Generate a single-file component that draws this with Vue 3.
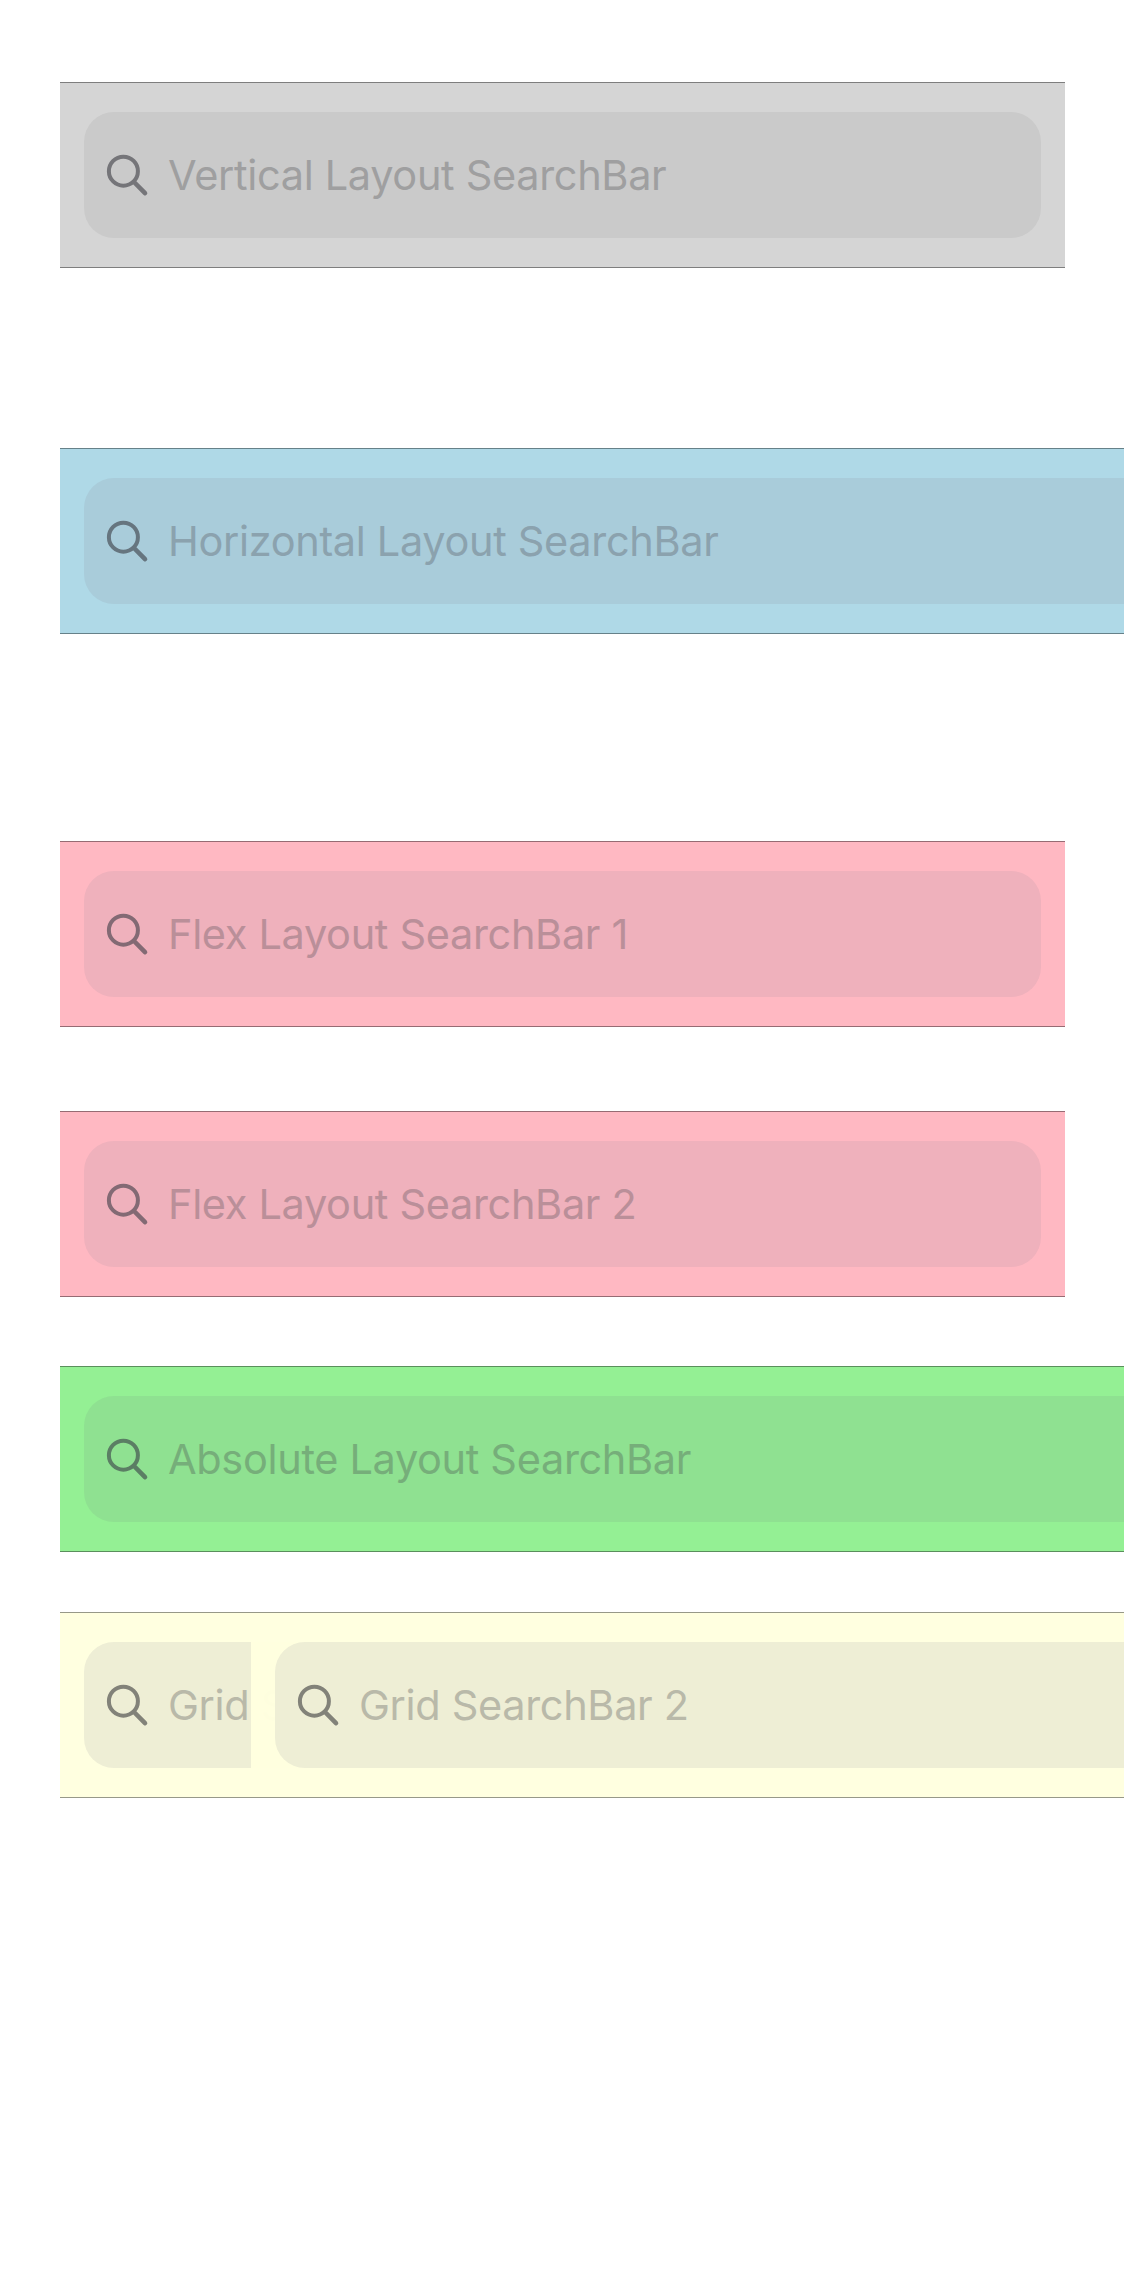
<script setup>
const sections = [
  { name: 'vertical', bars: [{ text: 'Vertical Layout SearchBar', tone: 'gray' }] },
  { name: 'horizontal', bars: [{ text: 'Horizontal Layout SearchBar', tone: 'blue', wide: true }] },
  { name: 'flex', bars: [
    { text: 'Flex Layout SearchBar 1', tone: 'pink' },
    { text: 'Flex Layout SearchBar 2', tone: 'pink' },
  ] },
  { name: 'absolute', bars: [{ text: 'Absolute Layout SearchBar', tone: 'green', wide: true }] },
  { name: 'grid', bars: [
    { text: 'Grid SearchBar 1', tone: 'yellow' },
    { text: 'Grid SearchBar 2', tone: 'yellow', wide: true },
  ] },
]
</script>

<template>
  <main class="page">
    <section v-for="s in sections" :key="s.name" :class="['section', s.name]">
      <div v-for="b in s.bars" :key="b.text" :class="['bar', b.tone, { wide: b.wide }]">
        <div class="field">
          <svg class="icon" viewBox="0 0 44 44" fill="none" stroke="currentColor">
            <circle cx="18.4" cy="18.2" r="14.5" stroke-width="4" />
            <path d="M29 29 L40 40.2" stroke-width="4.6" stroke-linecap="round" />
          </svg>
          <span class="placeholder">{{ b.text }}</span>
        </div>
      </div>
    </section>
  </main>
</template>

<style>
body {
  margin: 0;
  background: #fff;
}
</style>

<style scoped>
.page {
  box-sizing: border-box;
  width: 1124px;
  height: 2286px;
  padding: 82px 0 0 60px;
  overflow: hidden;
  background: #fff;
  font-family: Inter, "Liberation Sans", sans-serif;
}
.section {
  display: flex;
  flex-direction: column;
}
.horizontal { margin-top: 180px; }
.flex { margin-top: 207px; gap: 84px; }
.absolute { margin-top: 69px; }
.grid {
  display: grid;
  grid-template-columns: 191px 1000px;
  margin-top: 60px;
}
.bar {
  box-sizing: border-box;
  width: 1005px;
  height: 186px;
  padding: 29px 24px 0;
  border-top: 1px solid var(--line);
  border-bottom: 1px solid var(--line);
  background: var(--bar);
}
.wide { width: 1200px; }
.grid .bar { width: 501px; }
.grid .wide { width: 1000px; z-index: 1; }
.field {
  box-sizing: border-box;
  display: flex;
  align-items: center;
  height: 126px;
  padding-left: 21px;
  border-radius: 30px;
  background: var(--field);
}
.icon {
  flex: none;
  width: 44px;
  height: 44px;
  margin-top: -1px;
  color: var(--icon);
}
.placeholder {
  margin-left: 19px;
  font-size: 41.5px;
  line-height: 50px;
  letter-spacing: -0.34px;
  white-space: nowrap;
  color: var(--text);
}
.gray { --bar: #d5d5d5; --field: #cacaca; --text: #9f9fa0; --icon: #757579; --line: #7e7e7e; }
.blue { --bar: #afd9e7; --field: #a9ccda; --text: #8ba2ae; --icon: #66757f; --line: #668189; }
.pink { --bar: #ffb8c2; --field: #efb1bc; --text: #ba8f99; --icon: #836a74; --line: #966b73; }
.green { --bar: #94f094; --field: #8fe191; --text: #76ae7a; --icon: #5b7e64; --line: #5a8f5c; }
.yellow { --bar: #ffffe0; --field: #eeeed5; --text: #b9b9a9; --icon: #828279; --line: #979888; }
.yellow.wide { --bar: rgba(255, 255, 223, 0.98); }
</style>
